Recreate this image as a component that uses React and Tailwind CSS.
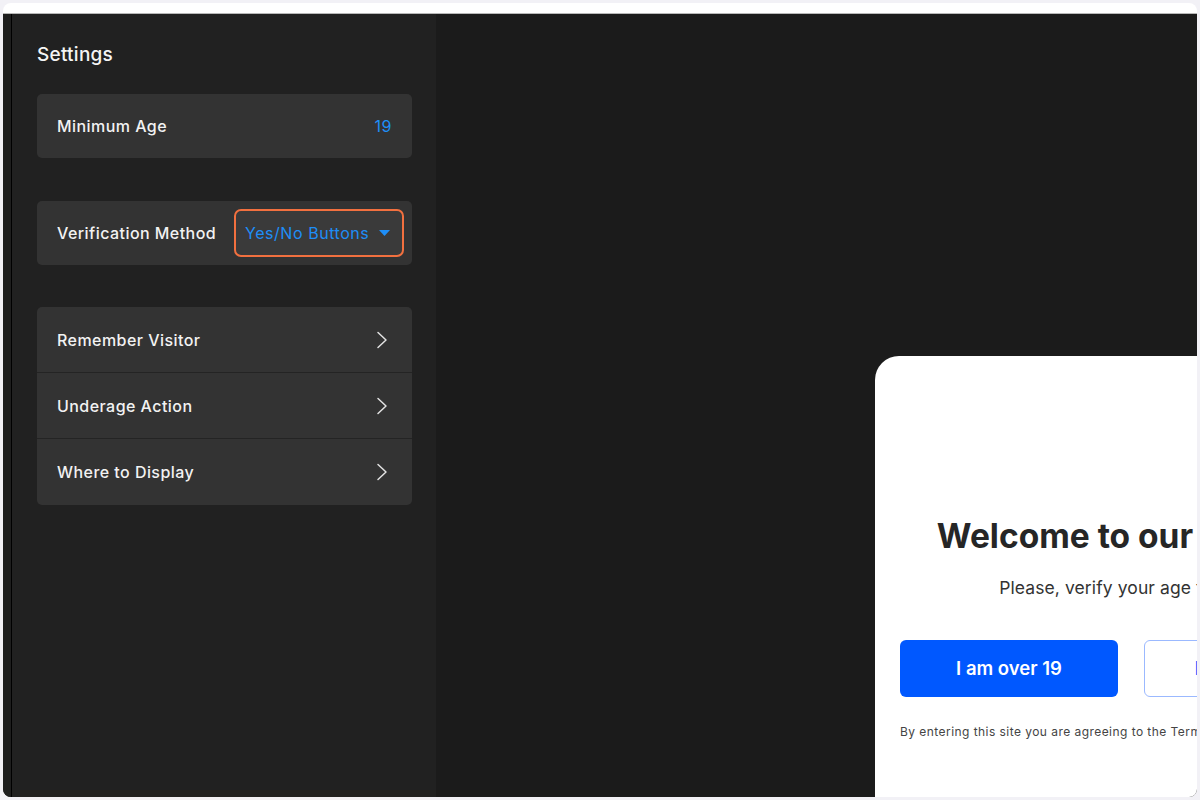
import React from "react";

const FONT = { fontFamily: "Inter, 'Noto Sans', sans-serif" };

function Chevron() {
    return (
        <svg width="12" height="18" viewBox="0 0 12 18" fill="none">
            <polyline points="2,1.5 10,9 2,16.5" stroke="#e2e2e2" strokeWidth="1.5" strokeLinecap="round" strokeLinejoin="round" />
        </svg>
    );
}

function NavRow({ label, last }) {
    return (
        <div className={`h-[66px] flex items-center justify-between pl-5 pr-6 ${last ? "" : "border-b border-[#242424]"}`}>
            <span className="text-[16px] font-medium text-[#f2f2f2] tracking-[0.45px]">{label}</span>
            <Chevron />
        </div>
    );
}

export default function App() {
    return (
        <div className="w-[1200px] h-[800px] bg-[#f2f1f6] p-[3px]" style={FONT}>
            <div className="h-full rounded-[8px] bg-white overflow-hidden flex flex-col pt-[10px]">
                <div className="flex-1 flex border-t border-[#b8b8b8] bg-[#1b1b1b] overflow-hidden">
                    {/* left strip */}
                    <div className="w-[9px] bg-[#1e1e1e] border-r border-black" />

                    {/* settings sidebar */}
                    <div className="w-[424px] shrink-0 bg-[#212121] pl-[25px] pr-[24px] pt-[30px]">
                        <h1 className="text-[19px] font-medium text-[#f4f4f4] leading-[22px] tracking-[0.25px]">Settings</h1>

                        <div className="mt-[28px] h-[64px] rounded-[5px] bg-[#333333] flex items-center justify-between px-5">
                            <span className="text-[16px] font-medium text-[#f2f2f2] tracking-[0.45px]">Minimum Age</span>
                            <span className="text-[16px] text-[#1e8ef7] tracking-[0.5px]">19</span>
                        </div>

                        <div className="mt-[43px] h-[64px] rounded-[5px] bg-[#333333] flex items-center justify-between pl-5 pr-2">
                            <span className="text-[16px] font-medium text-[#f2f2f2] tracking-[0.45px]">Verification Method</span>
                            <div className="h-[48px] w-[170px] rounded-[7px] border-2 border-[#f2703f] bg-[#3a3a3a] flex items-center justify-between pl-[9px] pr-[12px]">
                                <span className="text-[16px] text-[#1e8ef7] tracking-[0.55px]">Yes/No Buttons</span>
                                <svg width="11" height="7" viewBox="0 0 11 7">
                                    <polygon points="0,0 11,0 5.5,6" fill="#1e8ef7" />
                                </svg>
                            </div>
                        </div>

                        <div className="mt-[42px] rounded-[5px] bg-[#333333] overflow-hidden">
                            <NavRow label="Remember Visitor" />
                            <NavRow label="Underage Action" />
                            <NavRow label="Where to Display" last />
                        </div>
                    </div>

                    {/* preview area */}
                    <div className="flex-1 overflow-hidden pl-[439px] pt-[342px]">
                        <div className="w-[514px] h-[520px] shrink-0 bg-white rounded-tl-[24px] rounded-tr-[24px] px-[25px] pt-[160px] flex flex-col items-center">
                            <h2 className="pl-[14px] text-[33.5px] font-bold text-[#262626] leading-[40px] whitespace-nowrap">
                                Welcome to our website!
                            </h2>
                            <p className="mt-[20px] text-[17.5px] text-[#333333] leading-[24px] tracking-[0.1px] whitespace-nowrap">
                                Please, verify your age to enter.
                            </p>
                            <div className="mt-[40px] w-full flex gap-[26px]">
                                <button className="flex-1 h-[57px] rounded-[6px] bg-[#0058ff] text-white text-[18.5px] font-semibold">
                                    I am over 19
                                </button>
                                <button className="flex-1 h-[57px] rounded-[6px] border border-[#9bb9ff] bg-white text-[#0058ff] text-[18.5px] font-semibold">
                                    I am under 19
                                </button>
                            </div>
                            <p className="mt-[26px] self-start text-[12px] text-[#444444] tracking-[0.45px] whitespace-nowrap">
                                By entering this site you are agreeing to the Terms of Use and Privacy Policy.
                            </p>
                        </div>
                    </div>
                </div>
            </div>
        </div>
    );
}
